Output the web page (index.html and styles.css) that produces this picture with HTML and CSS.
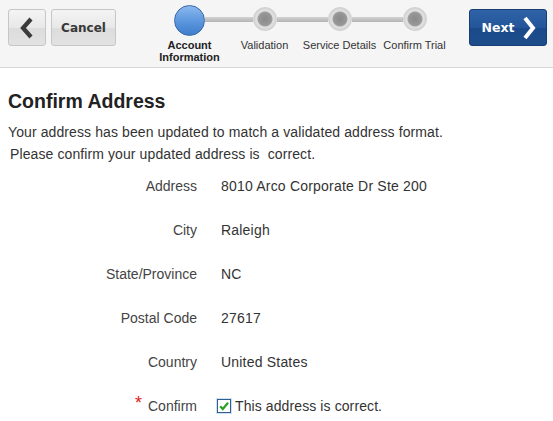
FILE: index.html
```html
<!DOCTYPE html>
<html lang="en">
<head>
<meta charset="utf-8">
<title>Confirm Address</title>
<link rel="stylesheet" href="styles.css">
</head>
<body>
<div class="header">
  <button class="btn btn-back" aria-label="Back">
    <svg width="16" height="22" viewBox="0 0 16 22"><path d="M12 2 L4 11 L12 20" fill="none" stroke="#3a3a3a" stroke-width="4.2" stroke-linejoin="miter"/></svg>
  </button>
  <button class="btn btn-cancel">Cancel</button>
  <ol class="train">
    <li class="step current"><div class="track"><span class="line"></span><span class="dot"></span><span class="line"></span></div><span class="label">Account Information</span></li>
    <li class="step"><div class="track"><span class="line"></span><span class="dot"></span><span class="line"></span></div><span class="label">Validation</span></li>
    <li class="step"><div class="track"><span class="line"></span><span class="dot"></span><span class="line"></span></div><span class="label">Service Details</span></li>
    <li class="step"><div class="track"><span class="line"></span><span class="dot"></span><span class="line"></span></div><span class="label">Confirm Trial</span></li>
  </ol>
  <button class="btn btn-next">Next
    <svg width="14" height="24" viewBox="0 0 14 24"><path d="M3 2 L11 12 L3 22" fill="none" stroke="#ffffff" stroke-width="4" stroke-linejoin="miter"/></svg>
  </button>
</div>
<div class="content">
  <h1 class="title">Confirm Address</h1>
  <p class="intro">Your address has been updated to match a validated address format.</p>
  <p class="intro indent">Please confirm your updated address is&nbsp; correct.</p>
  <div class="form">
    <div class="lbl">Address</div><div class="val">8010 Arco Corporate Dr Ste 200</div>
    <div class="lbl">City</div><div class="val">Raleigh</div>
    <div class="lbl">State/Province</div><div class="val">NC</div>
    <div class="lbl">Postal Code</div><div class="val">27617</div>
    <div class="lbl">Country</div><div class="val">United States</div>
    <div class="lbl"><span class="req">*</span>Confirm</div>
    <div class="val check-val"><span class="checkbox"><svg width="12" height="12" viewBox="0 0 12 12"><path d="M2.2 6.2 L4.8 9 L10 2.8" fill="none" stroke="#27a127" stroke-width="2.2"/></svg></span>This address is correct.</div>
  </div>
</div>
</body>
</html>
```

FILE: styles.css
```css
* { box-sizing: border-box; }
body {
  margin: 0;
  font-family: "Liberation Sans", Arial, sans-serif;
  color: #333;
  background: #fff;
}
.header {
  display: flex;
  align-items: flex-start;
  height: 68px;
  padding: 0 6px 0 8px;
  background: #f5f5f5;
  border-bottom: 1px solid #d6d6d6;
}
.btn {
  margin-top: 9px;
  height: 37px;
  border-radius: 3px;
  display: flex;
  align-items: center;
  justify-content: center;
  padding: 0;
  cursor: pointer;
}
.btn-back, .btn-cancel {
  border: 1px solid #c6c6c6;
  background: linear-gradient(#f4f4f4, #e8e8e8 50%, #dcdcdc 51%, #e2e2e2);
}
.btn-back { width: 38px; }
.btn-cancel {
  width: 65px;
  margin-left: 5px;
  font-family: "DejaVu Sans", Verdana, sans-serif;
  font-weight: bold;
  font-size: 12px;
  color: #383838;
}
.btn-next {
  margin-left: auto;
  width: 78px;
  border: 1px solid #173e74;
  background: linear-gradient(#2f63a6, #24559a 50%, #1b4a8a 51%, #1e4d8c);
  font-family: "DejaVu Sans", Verdana, sans-serif;
  font-weight: bold;
  font-size: 12.5px;
  color: #fff;
  gap: 8px;
  padding-left: 2px;
}
.train {
  list-style: none;
  margin: 0 0 0 36px;
  padding: 0;
  display: flex;
}
.step {
  width: 75px;
  display: flex;
  flex-direction: column;
  align-items: center;
}
.track {
  width: 100%;
  height: 39px;
  display: flex;
  align-items: center;
  padding-bottom: 1px;
}
.line {
  flex: 1;
  height: 5px;
  background: linear-gradient(#d2d2d2, #b4b4b4);
}
.step:first-child .track .line:first-child,
.step:last-child .track .line:last-child { visibility: hidden; }
.dot {
  width: 24px;
  height: 24px;
  border-radius: 50%;
  background: radial-gradient(circle at 50% 50%, #8a8a8a 0, #979797 6px, #a0a0a0 7px, #e2e2e2 8px, #d2d2d2 11.5px);
  border: 1px solid #d0d0d0;
  flex: none;
}
.current .dot {
  width: 31px;
  height: 31px;
  margin-top: 2px;
  border: 1px solid #3a68a8;
  background: linear-gradient(#8ab8ee, #5a95dd 55%, #3f7dcb);
}
.label {
  font-size: 11px;
  line-height: 12px;
  color: #333;
  text-align: center;
}
.current .label {
  font-weight: bold;
  color: #222;
}
.content { padding: 0 8px; }
.title {
  margin: 21px 0 0;
  font-size: 19.5px;
  line-height: 24px;
  font-weight: bold;
  color: #222;
}
.intro {
  margin: 0;
  font-size: 14px;
  line-height: 22px;
  letter-spacing: 0.1px;
  color: #333;
}
.intro:first-of-type { margin-top: 8px; }
.indent { padding-left: 2px; }
.form {
  display: grid;
  grid-template-columns: 189px 1fr;
  grid-auto-rows: 44px;
  column-gap: 24px;
  align-items: center;
  font-size: 14px;
  margin-top: -1px;
}
.lbl {
  text-align: right;
  color: #444;
}
.val {
  color: #333;
  letter-spacing: 0.2px;
}
.req {
  color: #e0201a;
  font-size: 18px;
  position: relative;
  top: -2px;
  margin-right: 6px;
  line-height: 0;
}
.check-val {
  display: flex;
  align-items: center;
  margin-left: -4px;
  gap: 4px;
  letter-spacing: 0.1px;
}
.checkbox {
  width: 14px;
  height: 14px;
  border: 1px solid #2f5f8f;
  box-shadow: 0 0 0 1px #cfe0f2;
  background: #fff;
  display: flex;
  align-items: center;
  justify-content: center;
}
```
